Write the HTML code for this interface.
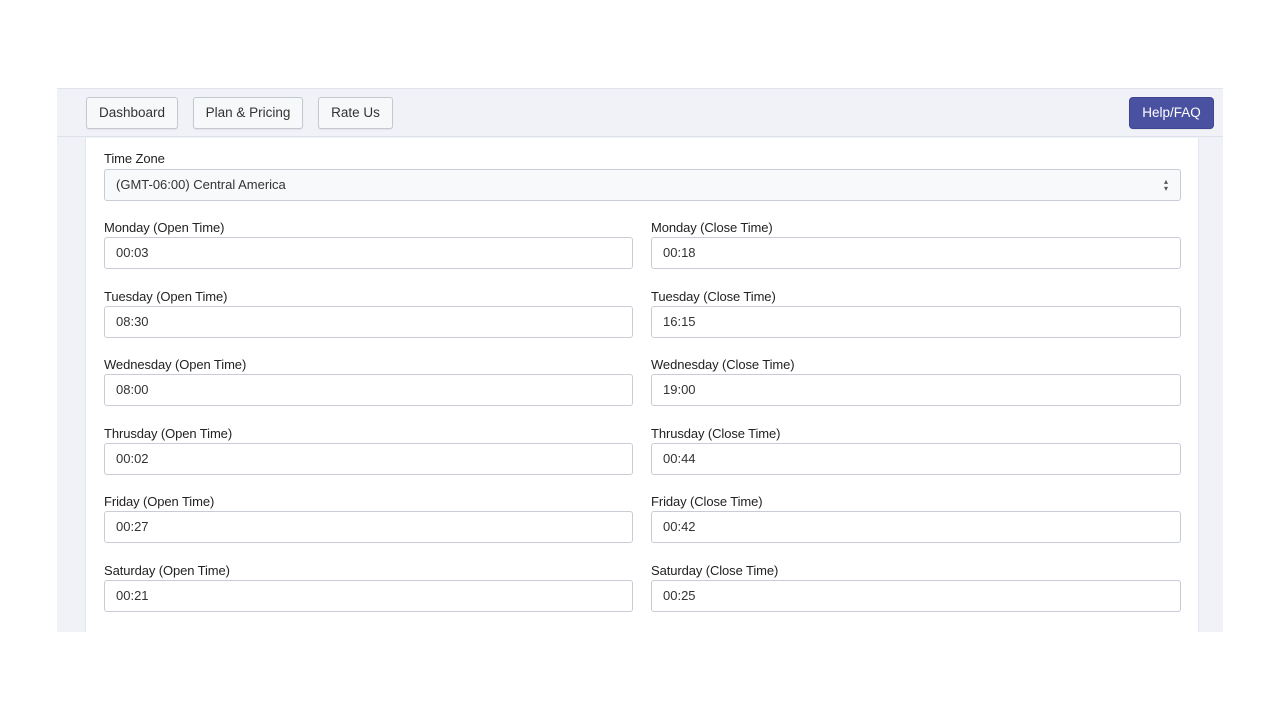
<!DOCTYPE html>
<html><head><style>
*{box-sizing:border-box;margin:0;padding:0}
body{width:1280px;height:720px;background:#fff;font-family:"Liberation Sans",sans-serif;position:relative;overflow:hidden}
.outer{position:absolute;left:57px;top:88px;width:1166px;height:544px;background:#f0f2f7;border-top:1px solid #e1e4ea;overflow:hidden}
.bar{position:absolute;left:0;top:0;width:100%;height:48px;border-bottom:1px solid #dde1e8}
.btn{position:absolute;top:8px;height:32px;border:1px solid #c3c8d1;border-radius:3px;background:#f7f8fa;font-size:13.5px;color:#333;text-align:center;line-height:30px;box-shadow:0 1px 1px rgba(0,0,0,.06)}
.help{background:#4a51a0;border-color:#3e4592;color:#fff;border-radius:4px}
.panel{position:absolute;left:28px;top:49px;width:1114px;height:500px;background:#fff;border-left:1px solid #e3e6ec;border-right:1px solid #e3e6ec}
.lbl{position:absolute;font-size:13px;color:#222;letter-spacing:-.1px}
.inp{position:absolute;height:32px;border:1px solid #c7ccd6;border-radius:3px;font-size:13px;color:#333;line-height:30px;padding-left:11px;background:#fff}
.sel{background:#f8f9fb}
</style></head><body>
<div class="outer">
<div class="bar">
<div class="btn" style="left:29px;width:92px">Dashboard</div>
<div class="btn" style="left:136px;width:110px">Plan &amp; Pricing</div>
<div class="btn" style="left:261px;width:75px">Rate Us</div>
<div class="btn help" style="left:1072px;width:85px">Help/FAQ</div>
</div>
<div class="panel">
<div class="lbl" style="left:18px;top:13px">Time Zone</div>
<div class="inp sel" style="left:18px;top:31px;width:1077px">(GMT-06:00) Central America<span style="position:absolute;right:12px;top:0;font-size:8px;color:#555;line-height:7px;margin-top:8px">▴<br>▾</span></div>
</div>
</div>
<div id="rows"></div>
<script>
var d=[["Monday","00:03","00:18"],["Tuesday","08:30","16:15"],["Wednesday","08:00","19:00"],["Thrusday","00:02","00:44"],["Friday","00:27","00:42"],["Saturday","00:21","00:25"],["Sunday","",""]];
var p=document.querySelector('.panel'),h='';
d.forEach(function(r,i){var y=82+i*68.6;
h+='<div class="lbl" style="left:18px;top:'+y+'px">'+r[0]+' (Open Time)</div><div class="inp" style="left:18px;top:'+(y+17)+'px;width:529px">'+r[1]+'</div>';
h+='<div class="lbl" style="left:565px;top:'+y+'px">'+r[0]+' (Close Time)</div><div class="inp" style="left:565px;top:'+(y+17)+'px;width:530px">'+r[2]+'</div>';});
p.insertAdjacentHTML('beforeend',h);
</script>
</body></html>
